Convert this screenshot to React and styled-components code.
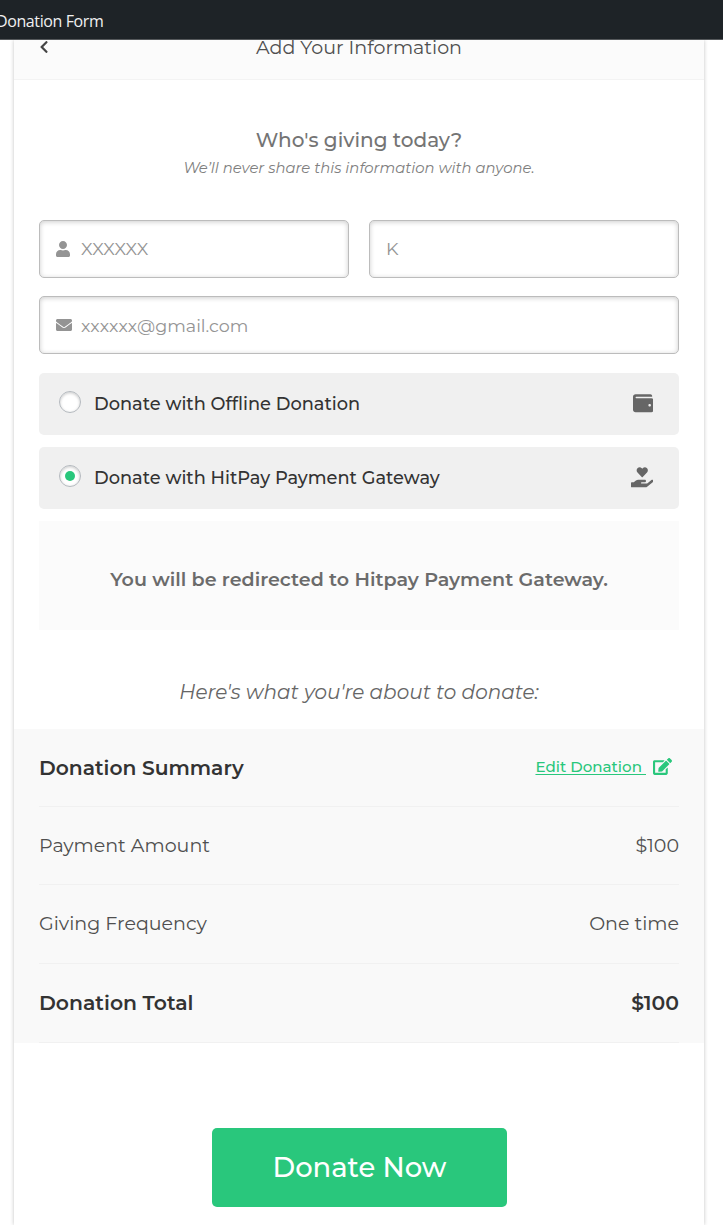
import React from "react";
import styled, { createGlobalStyle } from "styled-components";
import { FaUser, FaEnvelope, FaWallet, FaHandHoldingHeart, FaEdit, FaChevronLeft } from "react-icons/fa";

const GlobalStyle = createGlobalStyle`
  * { box-sizing: border-box; }
  body { margin: 0; background: #fff; font-family: Montserrat, Inter, sans-serif; }
  svg { display: block; }
`;

const Page = styled.div`
  height: 1225px;
  overflow: hidden;
  display: flex;
  flex-direction: column;
`;

const TopBar = styled.div`
  flex: none;
  height: 40px;
  padding-top: 1px;
  background: #1e2327;
  border-bottom: 1px solid #55585b;
  color: #f0f0f1;
  font: 400 16px/40px "Open Sans", sans-serif;
  letter-spacing: -0.4px;
  white-space: nowrap;
  text-indent: -4px;
`;

const Card = styled.main`
  flex: 1;
  width: 690px;
  margin-left: 14px;
  box-shadow: 0 0 4px rgba(0, 0, 0, 0.24);
  clip-path: inset(0 -8px 0 -8px);
`;

const Header = styled.header`
  display: grid;
  grid-template-columns: 60px 1fr 60px;
  height: 40px;
  background: #fbfbfb;
  border-bottom: 1px solid #f3f3f3;
  color: #4f4f4f;
`;

const Back = styled.button`
  display: flex;
  align-items: flex-start;
  padding: 0 0 0 23px;
  border: 0;
  background: none;
  color: #444;
  font-size: 14px;
`;

const Text = styled.div`
  font-size: ${(p) => p.$size}px;
  font-weight: ${(p) => p.$weight || 400};
  line-height: ${(p) => p.$line}px;
  font-style: ${(p) => (p.$italic ? "italic" : "normal")};
  color: ${(p) => p.$color || "inherit"};
  text-align: ${(p) => p.$align || "left"};
  white-space: nowrap;
`;

const Intro = styled.section`
  padding-top: 47px;
  height: 140px;
`;

const Fields = styled.div`
  display: grid;
  grid-template-columns: 1fr 1fr;
  gap: 18px 20px;
  padding: 0 25px;
`;

const Field = styled.div`
  grid-column: ${(p) => (p.$wide ? "1 / -1" : "auto")};
  display: flex;
  align-items: center;
  height: 58px;
  padding: ${(p) => (p.$wide ? "1px 0 0 16px" : "0 0 0 16px")};
  border: 1px solid #bcbcbc;
  border-radius: 5px;
  box-shadow: inset 0 1px 5px rgba(0, 0, 0, 0.2);
  color: #949494;
`;

const FieldIcon = styled.span`
  width: 25px;
  margin-top: -1px;
  font-size: 16px;
  svg { margin-left: ${(p) => p.$shift || 0}px; }
`;

const Options = styled.div`
  display: flex;
  flex-direction: column;
  gap: 12px;
  padding: 19px 25px 12px;
`;

const Option = styled.label`
  display: flex;
  align-items: center;
  height: 62px;
  padding: 0 26px 1px 20px;
  background: #f0f0f0;
  border-radius: 5px;
  color: #333;
`;

const Radio = styled.span`
  display: grid;
  place-items: center;
  width: 22px;
  height: 22px;
  margin: 0 13px 4px 0;
  border: 1px solid #b4b9be;
  border-radius: 50%;
  background: #fff;
  box-shadow: inset 0 1px 3px rgba(0, 0, 0, 0.22);
  &::after {
    content: "";
    width: 10px;
    height: 10px;
    margin-top: 1px;
    border-radius: 50%;
    background: ${(p) => (p.$on ? "#29c77c" : "transparent")};
  }
`;

const OptionIcon = styled.span`
  margin-left: auto;
  color: #666;
  font-size: ${(p) => p.$size}px;
`;

const Notice = styled.div`
  height: 109px;
  margin: 0 25px;
  padding-top: 44px;
  background: #fbfbfb;
`;

const About = styled.div`
  height: 99px;
  padding-top: 47px;
`;

const Summary = styled.section`
  height: 314px;
  padding: 0 25px;
  background: #f9f9f9;
`;

const Row = styled.div`
  display: flex;
  align-items: center;
  justify-content: space-between;
  height: ${(p) => p.$height}px;
  border-bottom: 1px solid #f1f1f1;
  color: ${(p) => (p.$strong ? "#333" : "#4f4f4f")};
`;

const Edit = styled.a`
  display: flex;
  align-items: center;
  gap: 7px;
  margin: 0 7px 2px 0;
  color: #29c77c;
  u { white-space: pre; text-underline-offset: 2px; text-decoration-thickness: 1px; }
  svg { font-size: 19px; margin-bottom: 1px; }
`;

const Donate = styled.button`
  display: block;
  width: 295px;
  height: 79px;
  margin: 85px 0 0 198px;
  padding: 0;
  border: 0;
  border-radius: 5px;
  background: #29c77c;
  color: #fff;
  font-family: inherit;
`;

export default function App() {
  return (
    <Page>
      <GlobalStyle />
      <TopBar>Donation Form</TopBar>
      <Card>
        <Header>
          <Back aria-label="Back"><FaChevronLeft /></Back>
          <Text $size={19.05} $line={15} $align="center">Add Your Information</Text>
        </Header>
        <Intro>
          <Text $size={20.05} $weight={500} $line={26} $align="center" $color="#747474">Who's giving today?</Text>
          <Text $size={14.85} $line={31} $align="center" $italic $color="#808080">We’ll never share this information with anyone.</Text>
        </Intro>
        <Fields>
          <Field><FieldIcon $shift={-1}><FaUser /></FieldIcon><Text $size={17.6} $line={24}>XXXXXX</Text></Field>
          <Field><Text $size={17.6} $line={24}>K</Text></Field>
          <Field $wide><FieldIcon><FaEnvelope /></FieldIcon><Text $size={17.55} $line={25}>xxxxxx@gmail.com</Text></Field>
        </Fields>
        <Options>
          <Option>
            <Radio />
            <Text $size={17.8} $weight={500} $line={24}>Donate with Offline Donation</Text>
            <OptionIcon $size={20.5}><FaWallet /></OptionIcon>
          </Option>
          <Option>
            <Radio $on />
            <Text $size={17.8} $weight={500} $line={24}>Donate with HitPay Payment Gateway</Text>
            <OptionIcon $size={22.5}><FaHandHoldingHeart /></OptionIcon>
          </Option>
        </Options>
        <Notice>
          <Text $size={19.1} $weight={600} $line={30} $align="center" $color="#6b6b6b">You will be redirected to Hitpay Payment Gateway.</Text>
        </Notice>
        <About>
          <Text $size={20} $line={30} $align="center" $italic $color="#666">Here's what you're about to donate:</Text>
        </About>
        <Summary>
          <Row $height={78} $strong>
            <Text $size={20.25} $weight={600} $line={26}>Donation Summary</Text>
            <Edit>
              <Text as="u" $size={15.1} $weight={500} $line={22}>{"Edit Donation "}</Text>
              <FaEdit />
            </Edit>
          </Row>
          <Row $height={78}>
            <Text $size={19.05} $line={26}>Payment Amount</Text>
            <Text $size={19.05} $line={26}>$100</Text>
          </Row>
          <Row $height={79}>
            <Text $size={19.05} $line={26}>Giving Frequency</Text>
            <Text $size={19.05} $line={26}>One time</Text>
          </Row>
          <Row $height={79} $strong>
            <Text $size={20.4} $weight={600} $line={26}>Donation Total</Text>
            <Text $size={20.4} $weight={600} $line={26}>$100</Text>
          </Row>
        </Summary>
        <Donate><Text $size={27.4} $weight={500} $line={79} $align="center">Donate Now</Text></Donate>
      </Card>
    </Page>
  );
}
